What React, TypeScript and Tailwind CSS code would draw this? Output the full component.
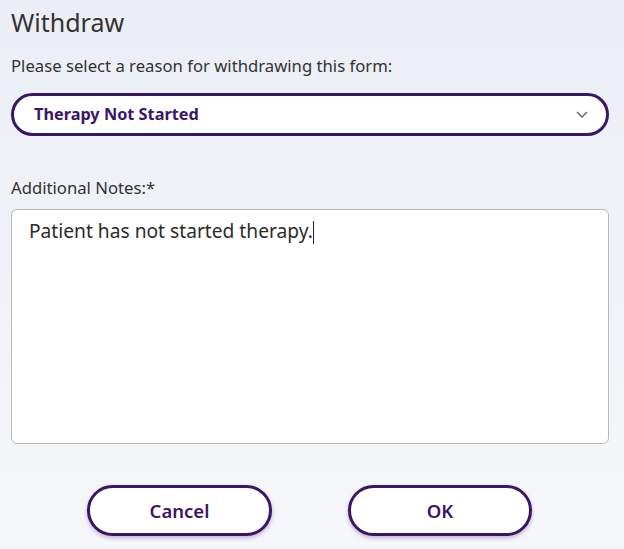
import React from "react";

export default function App() {
  return (
    <div
      className="w-[624px] h-[549px] bg-gradient-to-b from-[#ebeef5] to-[#f6f7fa] px-[11px] text-[#333333] overflow-hidden"
      style={{ fontFamily: '"Noto Sans", "Open Sans", sans-serif' }}
    >
      <h1 className="pt-[6px] text-[25px] leading-[32px] text-[#333333]">Withdraw</h1>
      <p className="mt-[17px] text-[16.7px] leading-[22px]">Please select a reason for withdrawing this form:</p>
      <div className="mt-[16px] w-[598px] h-[43px] rounded-full border-[3px] border-[#3b1566] bg-white flex items-center justify-between pl-[20px] pr-[18px]">
        <span className="text-[16.3px] font-bold text-[#3b1566]">Therapy Not Started</span>
        <svg width="12" height="7" viewBox="0 0 12 7" fill="none">
          <path d="M1 1 L6 6 L11 1" stroke="#6b6b6b" strokeWidth="1.5" />
        </svg>
      </div>
      <p className="mt-[41px] text-[16.7px] leading-[22px]">Additional Notes:*</p>
      <div className="mt-[10px] w-[598px] h-[235px] rounded-[6px] border border-[#b9b9bd] bg-white px-[17px] pt-[7px]">
        <span className="text-[19.2px] leading-[28px] text-[#2b2b2b]">Patient has not started therapy.</span>
        <span className="inline-block w-[1px] h-[23px] bg-[#222] align-middle -mt-[2px]" />
      </div>
      <div className="mt-[41px] flex">
        <button className="ml-[76px] w-[185px] h-[51px] rounded-full border-[3px] border-[#3b1566] bg-white text-[18.5px] font-semibold text-[#3b1566] shadow-[0_2px_4px_rgba(90,50,140,0.35)]">
          Cancel
        </button>
        <button className="ml-[76px] w-[184px] h-[51px] rounded-full border-[3px] border-[#3b1566] bg-white text-[18.5px] font-semibold text-[#3b1566] shadow-[0_2px_4px_rgba(90,50,140,0.35)]">
          OK
        </button>
      </div>
    </div>
  );
}
